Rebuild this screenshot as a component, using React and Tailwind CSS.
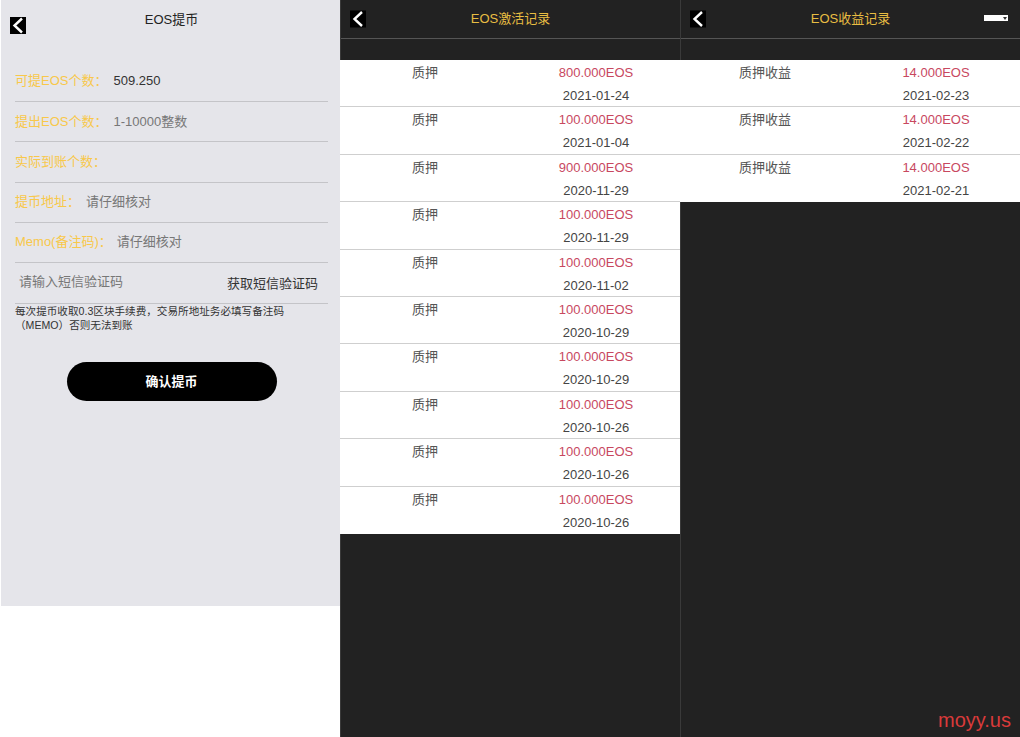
import React from 'react';

const font = 'font-["Liberation_Sans","Noto_Sans_CJK_SC",sans-serif]';

const activations = [
    ['质押', '800.000EOS', '2021-01-24'],
    ['质押', '100.000EOS', '2021-01-04'],
    ['质押', '900.000EOS', '2020-11-29'],
    ['质押', '100.000EOS', '2020-11-29'],
    ['质押', '100.000EOS', '2020-11-02'],
    ['质押', '100.000EOS', '2020-10-29'],
    ['质押', '100.000EOS', '2020-10-29'],
    ['质押', '100.000EOS', '2020-10-26'],
    ['质押', '100.000EOS', '2020-10-26'],
    ['质押', '100.000EOS', '2020-10-26'],
];

const earnings = [
    ['质押收益', '14.000EOS', '2021-02-23'],
    ['质押收益', '14.000EOS', '2021-02-22'],
    ['质押收益', '14.000EOS', '2021-02-21'],
];

const BackIcon = ({ className }) => (
    <svg viewBox="0 0 16 17" className={className}>
        <rect width="16" height="17" fill="#000" />
        <path d="M12 1.5 L4.5 8.5 L12 15.5" fill="none" stroke="#fff" strokeWidth="2.4" />
    </svg>
);

const FormRow = ({ label, value, valueClass, gap }) => (
    <div className="flex h-[40.2px] items-center border-b border-[#c4c4c8] pb-[1px]">
        <span className="text-[13px] text-[#f8c84a]">{label}</span>
        <span className={`text-[13px] ${gap} ${valueClass}`}>{value}</span>
    </div>
);

const RecordList = ({ title, rows, extra }) => (
    <div className="flex h-[737px] flex-col border-l border-[#3a3a3a] bg-[#222222]">
        <div className="relative flex h-[39px] items-center justify-center border-b border-[#555555]">
            <BackIcon className="absolute left-[9px] top-[10px] h-[18px] w-[16px]" />
            <span className="text-[13px] text-[#e8bd42]">{title}</span>
            {extra}
        </div>
        <div className="mt-[21px] -ml-px bg-white">
            {rows.map(([label, amount, date], i) => (
                <div key={i} className="grid h-[47.4px] grid-cols-2 border-b border-[#cfcfcf] pt-[1px] text-center text-[13px] leading-[23px] last:border-b-0">
                    <div className="text-[#555555]">{label}</div>
                    <div className="flex flex-col pl-[2px]">
                        <span className="text-[#c8485f]">{amount}</span>
                        <span className="text-[#444444]">{date}</span>
                    </div>
                </div>
            ))}
        </div>
    </div>
);

export default function App() {
    return (
        <div className={`relative grid h-[737px] w-[1020px] grid-cols-[340px_340px_340px] overflow-hidden bg-white ${font}`}>
            <div className="ml-px h-[606px] bg-[#e5e5ea]">
                <div className="relative h-[62px]">
                    <BackIcon className="absolute left-[9px] top-[17px] h-[17px] w-[16px]" />
                    <div className="pl-[2px] pt-[10px] text-center text-[13px] text-[#222222]">EOS提币</div>
                </div>
                <div className="ml-[14px] mr-[12px]">
                    <FormRow label="可提EOS个数：" value="509.250" valueClass="text-[#333333]" gap="ml-[6px]" />
                    <FormRow label="提出EOS个数：" value="1-10000整数" valueClass="text-[#777777]" gap="ml-[6px]" />
                    <FormRow label="实际到账个数：" value="" valueClass="" gap="" />
                    <FormRow label="提币地址：" value="请仔细核对" valueClass="text-[#777777]" gap="ml-[6px]" />
                    <FormRow label="Memo(备注码)：" value="请仔细核对" valueClass="text-[#777777]" gap="ml-[5px]" />
                    <div className="flex h-[41px] items-center justify-between border-b border-[#c4c4c8] pl-1 pr-[10px] text-[13px]">
                        <span className="-mt-[2px] text-[#777777]">请输入短信验证码</span>
                        <span className="mt-[2px] text-[#333333]">获取短信验证码</span>
                    </div>
                    <p className="w-[280px] text-[10.6px] leading-[14px] text-[#333333]">每次提币收取0.3区块手续费，交易所地址务必填写备注码（MEMO）否则无法到账</p>
                </div>
                <button className="mx-auto mt-[30px] block h-[39px] w-[210px] translate-x-[1px] rounded-full bg-black text-[13px] font-bold text-white">确认提币</button>
            </div>

            <RecordList title="EOS激活记录" rows={activations} />
            <RecordList
                title="EOS收益记录"
                rows={earnings}
                extra={
                    <span className="absolute right-[12px] top-[15px] flex h-[6px] w-6 items-center justify-end bg-white pr-[1px]">
                        <span className="border-x-[2px] border-t-[3px] border-x-transparent border-t-[#333333]" />
                    </span>
                }
            />

            <span className="absolute bottom-[2px] right-[9px] text-[20px] text-[#d93a3a]">moyy.us</span>
        </div>
    );
}
